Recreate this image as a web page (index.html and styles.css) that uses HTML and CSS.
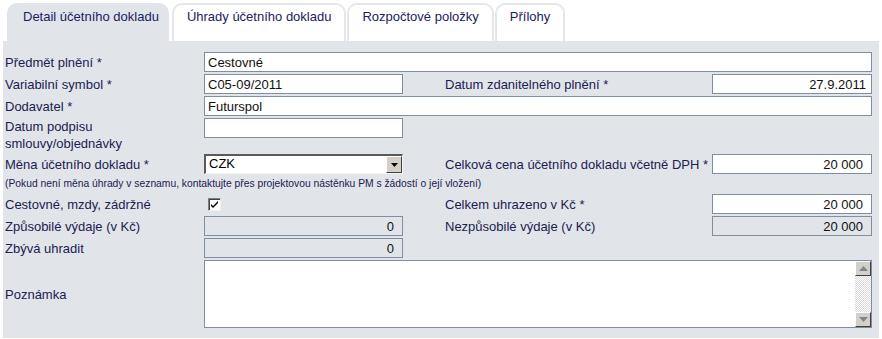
FILE: index.html
```html
<!DOCTYPE html>
<html lang="cs">
<head>
  <meta charset="UTF-8" />
  <title>Detail účetního dokladu</title>
  <link rel="stylesheet" href="styles.css">
</head>
<body>
  <div class="page">
    <ul class="tabs">
      <li class="tab active">Detail účetního dokladu</li>
      <li class="tab">Úhrady účetního dokladu</li>
      <li class="tab">Rozpočtové položky</li>
      <li class="tab">Přílohy</li>
    </ul>
    <div class="panel">
      <form class="form-grid">
        <label class="lbl">Předmět plnění *</label>
        <input class="field wide" type="text" value="Cestovné">

        <label class="lbl">Variabilní symbol *</label>
        <input class="field" type="text" value="C05-09/2011">
        <label class="lbl lbl-right">Datum zdanitelného plnění *</label>
        <input class="field num date" type="text" value="27.9.2011">

        <label class="lbl">Dodavatel *</label>
        <input class="field wide" type="text" value="Futurspol">

        <label class="lbl lbl-top">Datum podpisu<br>smlouvy/objednávky</label>
        <div class="top-cell"><input class="field" type="text" value=""></div>

        <label class="lbl">Měna účetního dokladu *</label>
        <div class="select-box">
          <span class="select-text">CZK</span>
          <span class="select-btn">
            <svg width="7" height="4" viewBox="0 0 7 4"><path d="M0 0h7L3.5 4z" fill="#000"/></svg>
          </span>
        </div>
        <label class="lbl lbl-right">Celková cena účetního dokladu včetně DPH *</label>
        <input class="field num" type="text" value="20 000">

        <p class="note">(Pokud není měna úhrady v seznamu, kontaktujte přes projektovou nástěnku PM s žádostí o její vložení)</p>

        <label class="lbl">Cestovné, mzdy, zádržné</label>
        <div class="check-cell">
          <span class="checkbox">
            <svg width="7" height="7" viewBox="0 0 7 7"><path d="M0 3l2 2 5-5v2L2 7 0 5z" fill="#000"/></svg>
          </span>
        </div>
        <label class="lbl lbl-right">Celkem uhrazeno v Kč *</label>
        <input class="field num" type="text" value="20 000">

        <label class="lbl">Způsobilé výdaje (v Kč)</label>
        <input class="field num readonly" type="text" value="0" readonly>
        <label class="lbl lbl-right">Nezpůsobilé výdaje (v Kč)</label>
        <input class="field num readonly" type="text" value="20 000" readonly>

        <label class="lbl">Zbývá uhradit</label>
        <input class="field num readonly" type="text" value="0" readonly>

        <label class="lbl">Poznámka</label>
        <div class="memo">
          <div class="memo-text"></div>
          <div class="scrollbar">
            <span class="sb-btn">
              <svg width="9" height="5" viewBox="0 0 9 5"><path d="M4.5 0L9 5H0z" fill="#7d8794"/></svg>
            </span>
            <span class="sb-track"></span>
            <span class="sb-btn">
              <svg width="9" height="5" viewBox="0 0 9 5"><path d="M0 0h9L4.5 5z" fill="#7d8794"/></svg>
            </span>
          </div>
        </div>
      </form>
    </div>
  </div>
</body>
</html>
```

FILE: styles.css
```css
* {
    margin: 0;
    padding: 0;
    box-sizing: border-box;
}
body {
    font-family: 'Liberation Sans', Arial, sans-serif;
    font-size: 13px;
    color: #1c2050;
    background: #fff;
}
.page {
    padding: 3px 3px 0 3px;
}

/* záložky */
.tabs {
    list-style: none;
    display: flex;
    padding-left: 4px;
    height: 38px;
}
.tab {
    height: 38px;
    padding: 4px 13px 0 13px;
    line-height: 15px;
    border: 2px solid #e3e6eb;
    border-bottom: none;
    border-radius: 10px 10px 0 0;
    background: #fff;
    color: #1c2060;
    margin-right: 1px;
    white-space: nowrap;
}
.tab.active {
    background: #e1e5ea;
    border-color: #e1e5ea;
    padding: 4px 8px 0 14px;
    margin-right: 3px;
}

/* panel s formulářem */
.panel {
    background: #e1e5ea;
    padding: 11px 7px 10px 2px;
}
.form-grid {
    display: grid;
    grid-template-columns: 199px 199px 309px 160px;
    row-gap: 2px;
}
.lbl {
    grid-column: 1;
    display: flex;
    align-items: center;
    line-height: 17px;
    min-height: 20px;
    color: #1c2050;
    white-space: nowrap;
}
.lbl-top {
    align-items: flex-start;
}
.lbl-right {
    grid-column: 3;
    padding-left: 42px;
}
.top-cell {
    align-self: start;
}
.field {
    display: block;
    width: 100%;
    height: 20px;
    border: 1px solid #7f8fa1;
    background: #fff;
    font-family: 'Liberation Sans', Arial, sans-serif;
    font-size: 13px;
    color: #111;
    padding: 0 3px;
    outline: none;
}
.field.wide {
    grid-column: 2 / 5;
}
.field.num {
    text-align: right;
    padding-right: 8px;
}
.field.date {
    padding-right: 5px;
}
.field.readonly {
    background: #e1e5ea;
}

/* rozbalovací seznam */
.select-box {
    display: flex;
    height: 20px;
    background: #fff;
    border-top: 2px solid #5a5a5a;
    border-left: 2px solid #5a5a5a;
    border-right: 1px solid #f4f4f4;
    border-bottom: 1px solid #f4f4f4;
}
.select-text {
    flex: 1;
    padding-left: 3px;
    line-height: 16px;
    color: #000;
}
.select-btn {
    width: 16px;
    display: flex;
    align-items: center;
    justify-content: center;
    background: #d4d0c8;
    border-top: 1px solid #fff;
    border-left: 1px solid #fff;
    border-right: 1px solid #404040;
    border-bottom: 1px solid #404040;
}

.note {
    grid-column: 1 / 5;
    font-size: 10.3px;
    line-height: 16px;
    color: #1c2050;
    white-space: nowrap;
}

.check-cell {
    display: flex;
    align-items: center;
    padding-left: 4px;
}
.checkbox {
    width: 13px;
    height: 13px;
    display: flex;
    align-items: center;
    justify-content: center;
    background: #fff;
    border-top: 1px solid #808080;
    border-left: 1px solid #808080;
    border-right: 1px solid #f0f0f0;
    border-bottom: 1px solid #f0f0f0;
    box-shadow: inset 1px 1px 0 #404040;
}

/* poznámka */
.memo {
    grid-column: 2 / 5;
    height: 68px;
    display: flex;
    background: #fff;
    border: 1px solid #7f8fa1;
}
.memo-text {
    flex: 1;
}
.scrollbar {
    width: 16px;
    display: flex;
    flex-direction: column;
    background-color: #fff;
    background-image: repeating-conic-gradient(#d8d8d8 0 25%, #fff 0 50%);
    background-size: 2px 2px;
}
.sb-btn {
    height: 15px;
    display: flex;
    align-items: center;
    justify-content: center;
    background: #d4d0c8;
    border-top: 1px solid #fff;
    border-left: 1px solid #fff;
    border-right: 1px solid #404040;
    border-bottom: 1px solid #404040;
}
.sb-track {
    flex: 1;
}
```
